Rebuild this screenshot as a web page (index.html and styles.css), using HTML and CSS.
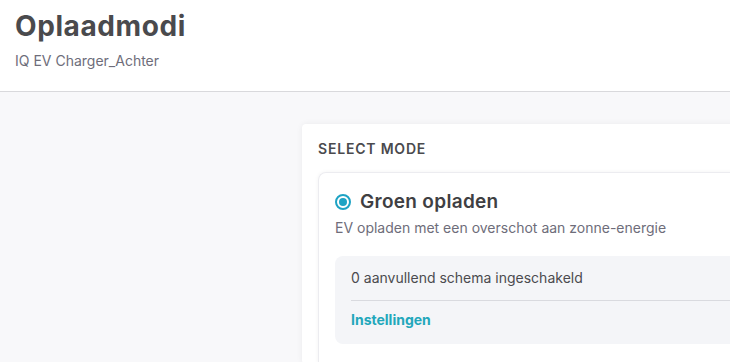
FILE: index.html
```html
<!DOCTYPE html>
<html lang="nl">

<head>
    <meta charset="UTF-8">
    <meta name="viewport" content="width=device-width, initial-scale=1.0">
    <title>Oplaadmodi</title>
    <link rel="stylesheet" href="styles.css">
</head>

<body>
    <header class="page-header">
        <h1>Oplaadmodi</h1>
        <div class="subtitle">IQ EV Charger_Achter</div>
    </header>

    <main class="content">
        <div class="spacer"></div>
        <section class="mode-card">
            <h2 class="section-title">SELECT MODE</h2>

            <div class="mode-option">
                <div class="mode-head">
                    <span class="radio checked"></span>
                    <span class="mode-name">Groen opladen</span>
                </div>
                <div class="mode-desc">EV opladen met een overschot aan zonne-energie</div>

                <div class="schedule-box">
                    <div class="schedule-count">0 aanvullend schema ingeschakeld</div>
                    <a class="settings-link">Instellingen</a>
                </div>

                <div class="option-divider"></div>
            </div>
        </section>
    </main>
</body>

</html>
```

FILE: styles.css
```css
body {
    margin: 0;
    background-color: #f8f8fa;
    font-family: Inter, 'Noto Sans', sans-serif;
    color: #4b4b4f;
    overflow: hidden;
}

.page-header {
    background-color: #ffffff;
    padding: 9px 15px 0;
    height: 82px;
    border-bottom: 1px solid #d9d9dc;
}

.page-header h1 {
    margin: 0;
    font-size: 28px;
    font-weight: 700;
    color: #4a4a4d;
    letter-spacing: 0.6px;
}

.subtitle {
    margin-top: 9px;
    font-size: 14px;
    color: #6e6d7a;
}

.content {
    display: flex;
    padding-top: 32px;
}

.spacer {
    width: 302px;
    flex-shrink: 0;
}

.mode-card {
    background-color: #ffffff;
    border-radius: 4px;
    box-shadow: 0 0 6px rgba(0, 0, 0, 0.06);
    padding: 16px 0 0 16px;
    min-width: 500px;
}

.section-title {
    margin: 0 0 15px;
    font-size: 14px;
    font-weight: 600;
    letter-spacing: 0.8px;
    color: #4a4a4d;
}

.mode-option {
    border: 1px solid #ececf0;
    border-right: none;
    border-radius: 8px 0 0 0;
    box-shadow: 0 0 4px rgba(0, 0, 0, 0.05);
    padding: 17px 0 0 16px;
}

.mode-head {
    display: flex;
    align-items: center;
    gap: 9px;
}

.radio {
    width: 12px;
    height: 12px;
    border: 2px solid #1ea3c4;
    border-radius: 50%;
    position: relative;
}

.radio.checked::after {
    content: "";
    position: absolute;
    left: 2px;
    top: 2px;
    width: 8px;
    height: 8px;
    border-radius: 50%;
    background-color: #1ea3c4;
}

.mode-name {
    font-size: 19px;
    font-weight: 600;
    letter-spacing: 0.3px;
    color: #3f3f43;
}

.mode-desc {
    margin-top: 6px;
    font-size: 14px;
    color: #6e6d7a;
}

.schedule-box {
    margin-top: 20px;
    background-color: #f4f5f8;
    border-radius: 8px 0 0 8px;
    padding: 13px 0 16px 16px;
}

.schedule-count {
    font-size: 14px;
    color: #4b4b4f;
    padding-bottom: 14px;
    border-bottom: 1px solid #d9dadf;
}

.settings-link {
    display: block;
    margin-top: 10px;
    font-size: 14px;
    font-weight: 700;
    color: #22a7bb;
}

.option-divider {
    margin-top: 18px;
    border-top: 1px solid #dcdce0;
}
```
